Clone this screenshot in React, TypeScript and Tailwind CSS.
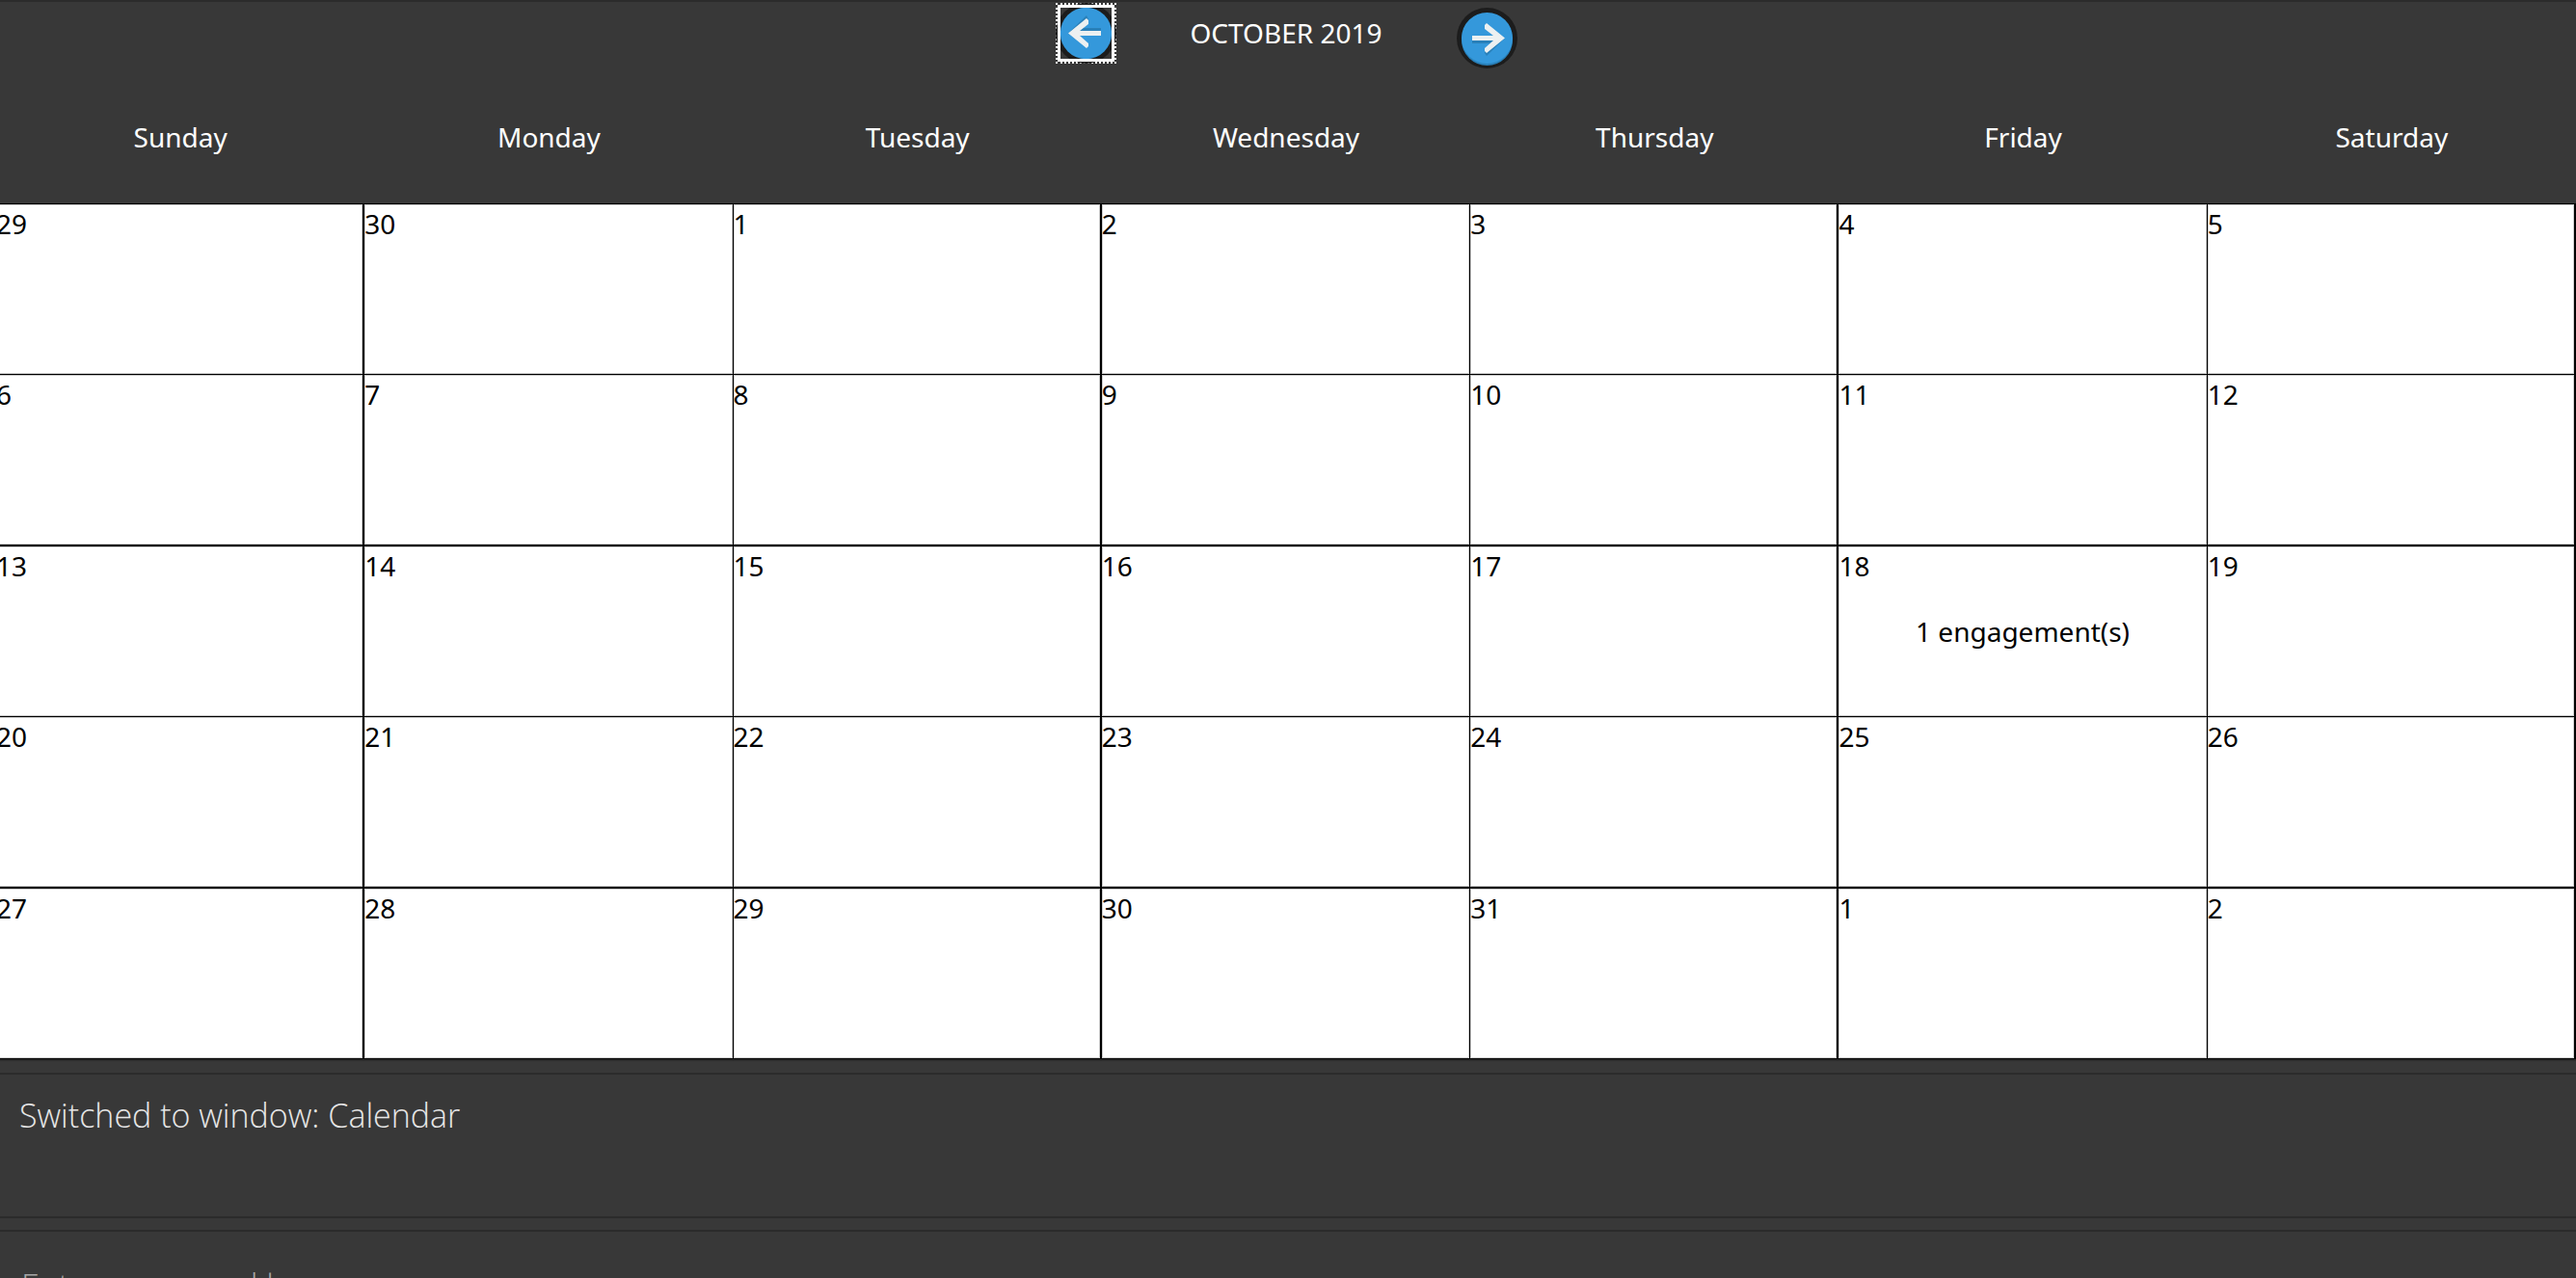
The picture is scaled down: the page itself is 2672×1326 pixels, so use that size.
import React from "react";

type Day = { date: number; note?: string };

const WEEKDAYS = ["Sunday", "Monday", "Tuesday", "Wednesday", "Thursday", "Friday", "Saturday"];

const WEEKS: Day[][] = [
  [{ date: 29 }, { date: 30 }, { date: 1 }, { date: 2 }, { date: 3 }, { date: 4 }, { date: 5 }],
  [{ date: 6 }, { date: 7 }, { date: 8 }, { date: 9 }, { date: 10 }, { date: 11 }, { date: 12 }],
  [{ date: 13 }, { date: 14 }, { date: 15 }, { date: 16 }, { date: 17 }, { date: 18, note: "1 engagement(s)" }, { date: 19 }],
  [{ date: 20 }, { date: 21 }, { date: 22 }, { date: 23 }, { date: 24 }, { date: 25 }, { date: 26 }],
  [{ date: 27 }, { date: 28 }, { date: 29 }, { date: 30 }, { date: 31 }, { date: 1 }, { date: 2 }],
];

function ArrowLeft() {
  return (
    <svg viewBox="0 0 63 63" className="size-full" aria-hidden="true">
      <circle cx="31.5" cy="31.5" r="31.5" fill="#1c1c1c" />
      <circle cx="31.5" cy="31.5" r="26.7" fill="#3498db" />
      <path d="M13 31.500 L32 13 L34 17 V22 L28 26 H47 V29 H25 Z" fill="#2980b9" />
      <path d="M13 31.500 L32 16 L34 18 V22 L25 29 H47 V34 H25 L34 42 V45 L32 47 Z" fill="#ecf0f1" />
    </svg>
  );
}

function ArrowRight() {
  return (
    <svg viewBox="0 0 63 63" className="size-full" aria-hidden="true">
      <circle cx="31.5" cy="31.5" r="31.5" fill="#1c1c1c" />
      <circle cx="31.5" cy="33.5" r="26.5" fill="#2980b9" />
      <circle cx="31.5" cy="31.5" r="26.5" fill="#3498db" />
      <path d="M16 31 H40 V37 H16 Z M50 31.500 L31 50 L29 47 V43 L40 33 Z" fill="#2980b9" />
      <path d="M50 31.500 L31 16 L29 18 V22 L38 29 H16 V34 H38 L29 42 V45 L31 47 Z" fill="#ecf0f1" />
    </svg>
  );
}

export default function App() {
  return (
    <div className="h-screen overflow-hidden bg-[#383838] font-['Noto_Sans','Open_Sans',sans-serif] text-[28px] leading-8">
      <main className="border-y-2 border-[#2b2b2b]">
        <div className="-ml-1">
          <header className="flex h-[69px] justify-center">
            <button
              type="button"
              aria-label="Previous month"
              className="relative mt-px size-[63px] self-start border-2 border-dotted border-white"
            >
              <span className="absolute -inset-0.5 block">
                <ArrowLeft />
              </span>
              <span className="absolute inset-0 border-[3px] border-white" />
            </button>
            <h1 className="w-[353px] pt-4 text-center text-white">OCTOBER 2019</h1>
            <button type="button" aria-label="Next month" className="size-[63px] self-end rounded-full">
              <ArrowRight />
            </button>
          </header>

          <table className="w-full table-fixed border-separate border-spacing-0">
            <thead>
              <tr className="h-[141px]">
                {WEEKDAYS.map((day) => (
                  <th key={day} scope="col" className="border-b border-black p-0 pt-0.5 font-normal text-white">
                    {day}
                  </th>
                ))}
              </tr>
            </thead>
            <tbody>
              {WEEKS.map((week, w) => (
                <tr key={w} className="group h-[177px] even:h-[178px]">
                  {week.map((day, d) => (
                    <td
                      key={d}
                      className="border-r border-b border-black bg-white p-0 align-top text-black shadow-[inset_0_0_0_1px_#cccccc] odd:border-r-2 last:border-r group-even:border-b-2"
                    >
                      <div className="pt-1">{day.date}</div>
                      {day.note && <p className="pt-9 text-center">{day.note}</p>}
                    </td>
                  ))}
                </tr>
              ))}
            </tbody>
          </table>
        </div>
      </main>

      <section
        aria-live="polite"
        className="mt-3 h-[151px] border-y-2 border-[#2b2b2b] px-5 pt-4 font-['Open_Sans',sans-serif] text-[34px] leading-[52px] font-light text-[#e6e6e6]"
      >
        Switched to window: Calendar
      </section>

      <div className="mt-3 border-t-2 border-[#2b2b2b] px-5 pt-6">
        <input
          type="text"
          aria-label="Command"
          placeholder="Enter command here..."
          className="h-16 w-full bg-transparent px-0.5 font-['Open_Sans',sans-serif] text-[34px] font-light text-white outline-none placeholder:text-[#a6a6a6]"
        />
      </div>
    </div>
  );
}
